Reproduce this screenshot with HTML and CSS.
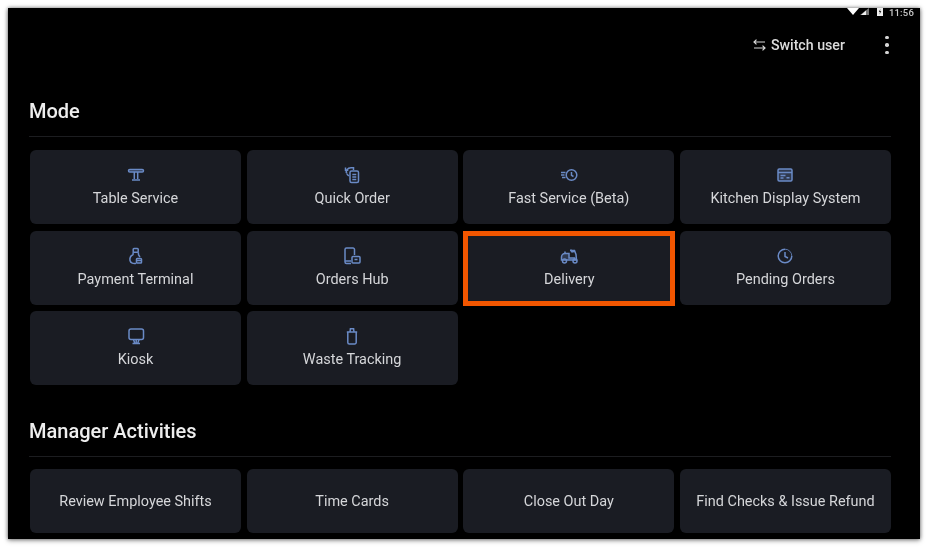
FILE: index.html
```html
<!DOCTYPE html>
<html lang="en">
<head>
<meta charset="utf-8">
<title>Mode</title>
<link rel="stylesheet" href="styles.css">
</head>
<body>
<main class="screen">
  <div class="status">
    <svg class="st-wifi" width="12" height="7" viewBox="0 0 12 7"><path d="M0 0h12L6 7z" fill="#fff"/></svg>
    <svg class="st-signal" width="9" height="7" viewBox="0 0 9 7"><path d="M9 0v7H0z" fill="#777"/><path d="M6 2.500V7H1z" fill="#eee"/></svg>
    <svg class="st-batt" width="6" height="8" viewBox="0 0 6 8"><path d="M0 0h6v8H0z" fill="#eee"/><path d="M3.300 1 1.800 4h1.100l-.3 2.500L4.300 3H3.100z" fill="#222"/></svg>
    <span class="clock">11:56</span>
  </div>
  <div class="topbar">
    <svg class="swap" width="13" height="12" viewBox="0 0 13 12" fill="none" stroke="#d8d8d8" stroke-width="1.200"><path d="M1 3h11M3.500.6 1 3l2.500 2.400M12 9H1M9.500 6.600 12 9l-2.500 2.400"/></svg>
    <span class="switch">Switch user</span>
    <span class="kebab"><i></i><i></i><i></i></span>
  </div>

  <h2 class="section first">Mode</h2>
  <div class="grid">
    <div class="card"><svg class="ic" viewBox="0 0 20 20"><rect class="tint" x="2.500" y="4.500" width="15" height="2.600" rx="1.300"/><path d="M8.300 7v7M11.700 7v7M6 15h8"/></svg><span>Table Service</span></div>
    <div class="card"><svg class="ic" viewBox="0 0 20 20"><rect x="8" y="6" width="8.500" height="11.500" rx="1.500"/><path d="M10.300 9.500h4M10.300 12h4M10.300 14.500h4M4.800 8.500C3.300 5.800 5.500 2.800 9 2.800h2.500V5M3.500 2.500v2.800h2.800M4.800 9l2 2"/></svg><span>Quick Order</span></div>
    <div class="card"><svg class="ic" viewBox="0 0 20 20"><circle cx="12.500" cy="10" r="5.300"/><path d="M12.500 7v3.300l2 1.200M2 7.500h4.500M2 10h3.500M3 12.500h3.500"/></svg><span>Fast Service (Beta)</span></div>
    <div class="card"><svg class="ic" viewBox="0 0 20 20"><rect class="tint" x="3" y="4" width="14" height="12" rx="1.200"/><path d="M3 7.500h14M5.500 10.500h5M5.500 13h3M11.500 12.700h3"/></svg><span>Kitchen Display System</span></div>
    <div class="card"><svg class="ic" viewBox="0 0 20 20"><rect x="7.200" y="2.500" width="5" height="3.800" rx=".8"/><path d="M7.200 6.300 7 8.500C4.500 10 3.500 12 4 14.500s3.500 3.500 6 2.800M12.300 6.300l.3 2.700 1.400 2"/><rect x="10.500" y="12.500" width="5" height="4.500" rx=".8"/><path d="M10.500 14.500h5"/></svg><span>Payment Terminal</span></div>
    <div class="card"><svg class="ic" viewBox="0 0 20 20"><path d="M9 17.500H4.500a1.500 1.500 0 0 1-1.500-1.500V3.500A1.500 1.500 0 0 1 4.500 2h6.500a1.500 1.500 0 0 1 1.500 1.500V9M3 15h6"/><rect x="10" y="10.500" width="8" height="6.500" rx="1"/><path d="M12.500 13.500h3"/></svg><span>Orders Hub</span></div>
    <div class="card active"><svg class="ic" viewBox="0 0 20 20"><path class="tint" d="M2.500 14v-3a3.500 3.500 0 0 1 3.500-3.500h4v4.500h5.500V14z"/><path d="M15.500 14 17.500 14 17 8.500 15.500 4.500H11M11.500 3.500l1.500 2.500 3-.8M6 7.500V5.500"/><circle cx="5.500" cy="15" r="2"/><circle cx="16" cy="15" r="2"/></svg><span>Delivery</span></div>
    <div class="card"><svg class="ic" viewBox="0 0 20 20"><path d="M10 3.200a6.800 6.800 0 1 0 6.800 6.800"/><path class="thin" d="M16.800 10A6.800 6.800 0 0 0 10 3.200"/><path d="M10 6v4.500l3 1.500"/></svg><span>Pending Orders</span></div>
    <div class="card"><svg class="ic" viewBox="0 0 20 20"><rect x="3" y="3" width="14.500" height="10.500" rx="2"/><path d="M10.200 13.500V17M6.500 17.500h7.500M7.500 13.500l1.200 3.500M13 13.500l-1.200 3.500"/></svg><span>Kiosk</span></div>
    <div class="card"><svg class="ic" viewBox="0 0 20 20"><path d="M5.800 6h8.400v10.500a1.500 1.500 0 0 1-1.500 1.500H7.300a1.500 1.500 0 0 1-1.500-1.500zM4.800 6h10.400M8 6l.4-3.200h3.200L12 6"/></svg><span>Waste Tracking</span></div>
  </div>

  <h2 class="section second">Manager Activities</h2>
  <div class="grid short">
    <div class="card"><span>Review Employee Shifts</span></div>
    <div class="card"><span>Time Cards</span></div>
    <div class="card"><span>Close Out Day</span></div>
    <div class="card"><span>Find Checks &amp; Issue Refund</span></div>
    <div class="card"></div>
    <div class="card"></div>
    <div class="card"></div>
    <div class="card"></div>
  </div>
</main>
</body>
</html>
```
FILE: styles.css
```css
* { box-sizing: border-box; }
html, body { margin: 0; height: 100%; overflow: hidden; background: #fff; }
body { padding: 8px 12px 11px 8px; font-family: Roboto, "Liberation Sans", sans-serif; }
.screen {
  width: 912px;
  height: 531px;
  background: #000;
  overflow: hidden;
  padding: 0 29px 0 21px;
  color: #dcdde0;
  box-shadow: 0 0 4px rgba(0,0,0,.55), 0 2px 5px rgba(0,0,0,.25);
  filter: blur(.5px);
}
.status {
  height: 9px;
  margin-right: -23px;
  display: flex;
  align-items: flex-start;
  justify-content: flex-end;
  font-size: 9.500px;
  line-height: 10px;
  color: #c9c9c9;
}
.st-signal { margin-left: 1px; }
.st-batt { margin-left: 8px; }
.clock { margin-left: 6px; font-weight: 500; letter-spacing: .2px; }
.topbar {
  height: 32px;
  margin-top: 12px;
  display: flex;
  align-items: center;
  justify-content: flex-end;
}
.swap { margin-right: 5px; }
.switch { font-size: 14.200px; font-weight: 500; color: #dcdcdc; }
.kebab {
  margin-left: 40px;
  margin-right: 2px;
  width: 4px;
  display: flex;
  flex-direction: column;
  gap: 4px;
}
.kebab i { width: 3.500px; height: 3.500px; border-radius: 50%; background: #d6d6d6; }
.section {
  margin: 0;
  border-bottom: 1px solid #1c1d20;
  font-weight: 500;
  color: #eeeeee;
  font-size: 20px;
  line-height: 24px;
}
.first { margin-top: 27px; padding: 11px 0 12px; height: 49px; }
.second { margin-top: 26px; padding: 8px 0 11px; height: 46px; }
.grid {
  display: grid;
  grid-template-columns: repeat(4, 211px);
  column-gap: 5.670px;
  row-gap: 6.500px;
  margin-top: 13px;
  margin-left: 1px;
}
.second + .grid { margin-top: 12px; }
.grid.short { grid-auto-rows: 63.500px; }
.grid:not(.short) { grid-auto-rows: 74px; }
.grid:not(.short) .card { padding-bottom: 1px; }
.short .card span { padding-top: 2px; }
.card {
  background: #1a1c23;
  border-radius: 6px;
  display: flex;
  flex-direction: column;
  align-items: center;
  justify-content: center;
  gap: 5px;
  font-size: 14.450px;
  color: #d5d6d9;
}
.card span { line-height: 18px; white-space: nowrap; }
.card.active {
  border: 5px solid #f25600;
  border-radius: 0;
  margin: 0 -1px -1px 0;
}
.ic {
  width: 20px;
  height: 20px;
  fill: none;
  stroke: #6a8ac6;
  stroke-width: 1.500;
}
.ic .tint { fill: rgba(106,138,198,.28); }
.ic .thin { stroke-width: .8; }
```
